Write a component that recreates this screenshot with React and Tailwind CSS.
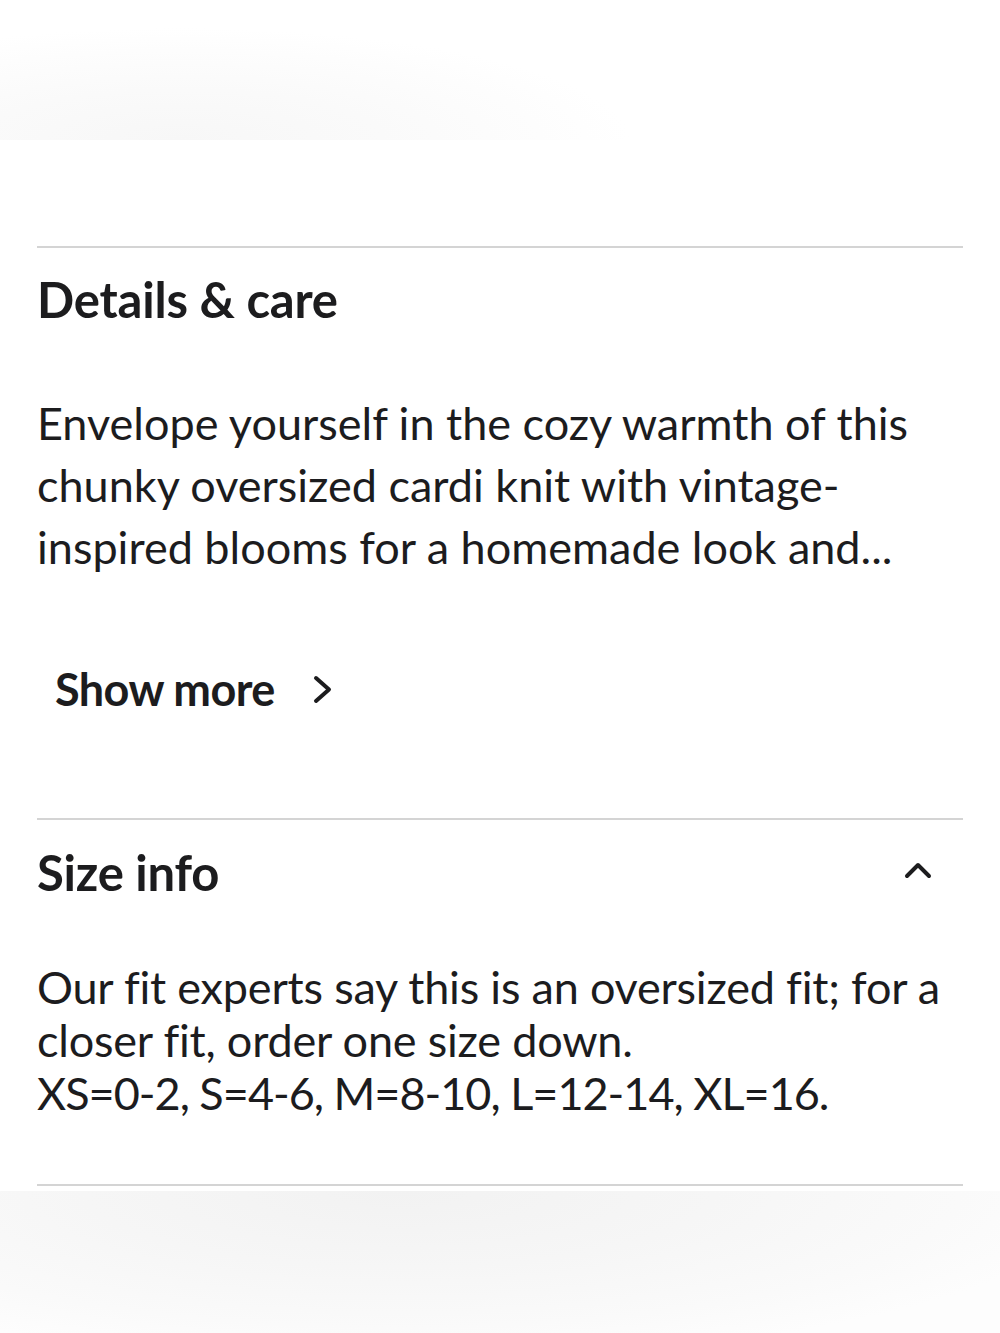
export default function App() {
  const font = { fontFamily: "Lato, 'Noto Sans', sans-serif" };
  return (
    <div className="w-[1000px] h-[1333px] bg-white overflow-hidden flex flex-col text-[#1c1c1e]" style={font}>
      <div className="h-[140px] shrink-0 bg-[radial-gradient(ellipse_45%_80%_at_18%_100%,#f7f7f7_0%,#fafafa_45%,#fdfdfd_80%,#ffffff_100%)]" />
      <div className="h-[106px] shrink-0" />
      <div className="px-[37px] flex flex-col">
        <div className="h-[2px] bg-[#d4d4d4]" />
        <div className="pt-[21px] text-[49px] font-bold leading-[60px] tracking-[-0.2px] whitespace-nowrap">Details &amp; care</div>
        <div className="pt-[63px] text-[45px] leading-[62px]">
          <div className="whitespace-nowrap">Envelope yourself in the cozy warmth of this</div>
          <div className="whitespace-nowrap">chunky oversized cardi knit with vintage-</div>
          <div className="whitespace-nowrap">inspired blooms for a homemade look and...</div>
        </div>
        <div className="pt-[81px] pb-[99px] pl-[18px] flex items-center">
          <span className="text-[45px] font-bold leading-[60px] tracking-[-0.6px] whitespace-nowrap">Show more</span>
          <svg className="ml-[37px]" width="21" height="31" viewBox="0 0 21 31" fill="none">
            <polyline points="4,4 17,15.5 4,27" stroke="#1c1c1e" strokeWidth="4" strokeLinecap="round" strokeLinejoin="round" />
          </svg>
        </div>
        <div className="h-[2px] bg-[#d4d4d4]" />
        <div className="pt-[22px] flex items-start justify-between">
          <span className="text-[49px] font-bold leading-[60px] tracking-[-0.2px] whitespace-nowrap">Size info</span>
          <svg className="mt-[19px] mr-[30px]" width="30" height="19" viewBox="0 0 30 19" fill="none">
            <polyline points="4,15 15,4 26,15" stroke="#1c1c1e" strokeWidth="4" strokeLinecap="round" strokeLinejoin="round" />
          </svg>
        </div>
        <div className="pt-[59px] pb-[64px] text-[45px] leading-[53px]">
          <div className="whitespace-nowrap tracking-[-0.2px]">Our fit experts say this is an oversized fit; for a</div>
          <div className="whitespace-nowrap tracking-[-0.2px]">closer fit, order one size down.</div>
          <div className="whitespace-nowrap tracking-[-1px]">XS=0-2, S=4-6, M=8-10, L=12-14, XL=16.</div>
        </div>
        <div className="h-[2px] bg-[#d4d4d4]" />
      </div>
      <div className="h-[5px] shrink-0" />
      <div className="flex-1 bg-[radial-gradient(ellipse_70%_120%_at_40%_0%,#f2f2f2_0%,#f6f6f6_45%,#fafafa_80%,#fdfdfd_100%)]" />
    </div>
  );
}
